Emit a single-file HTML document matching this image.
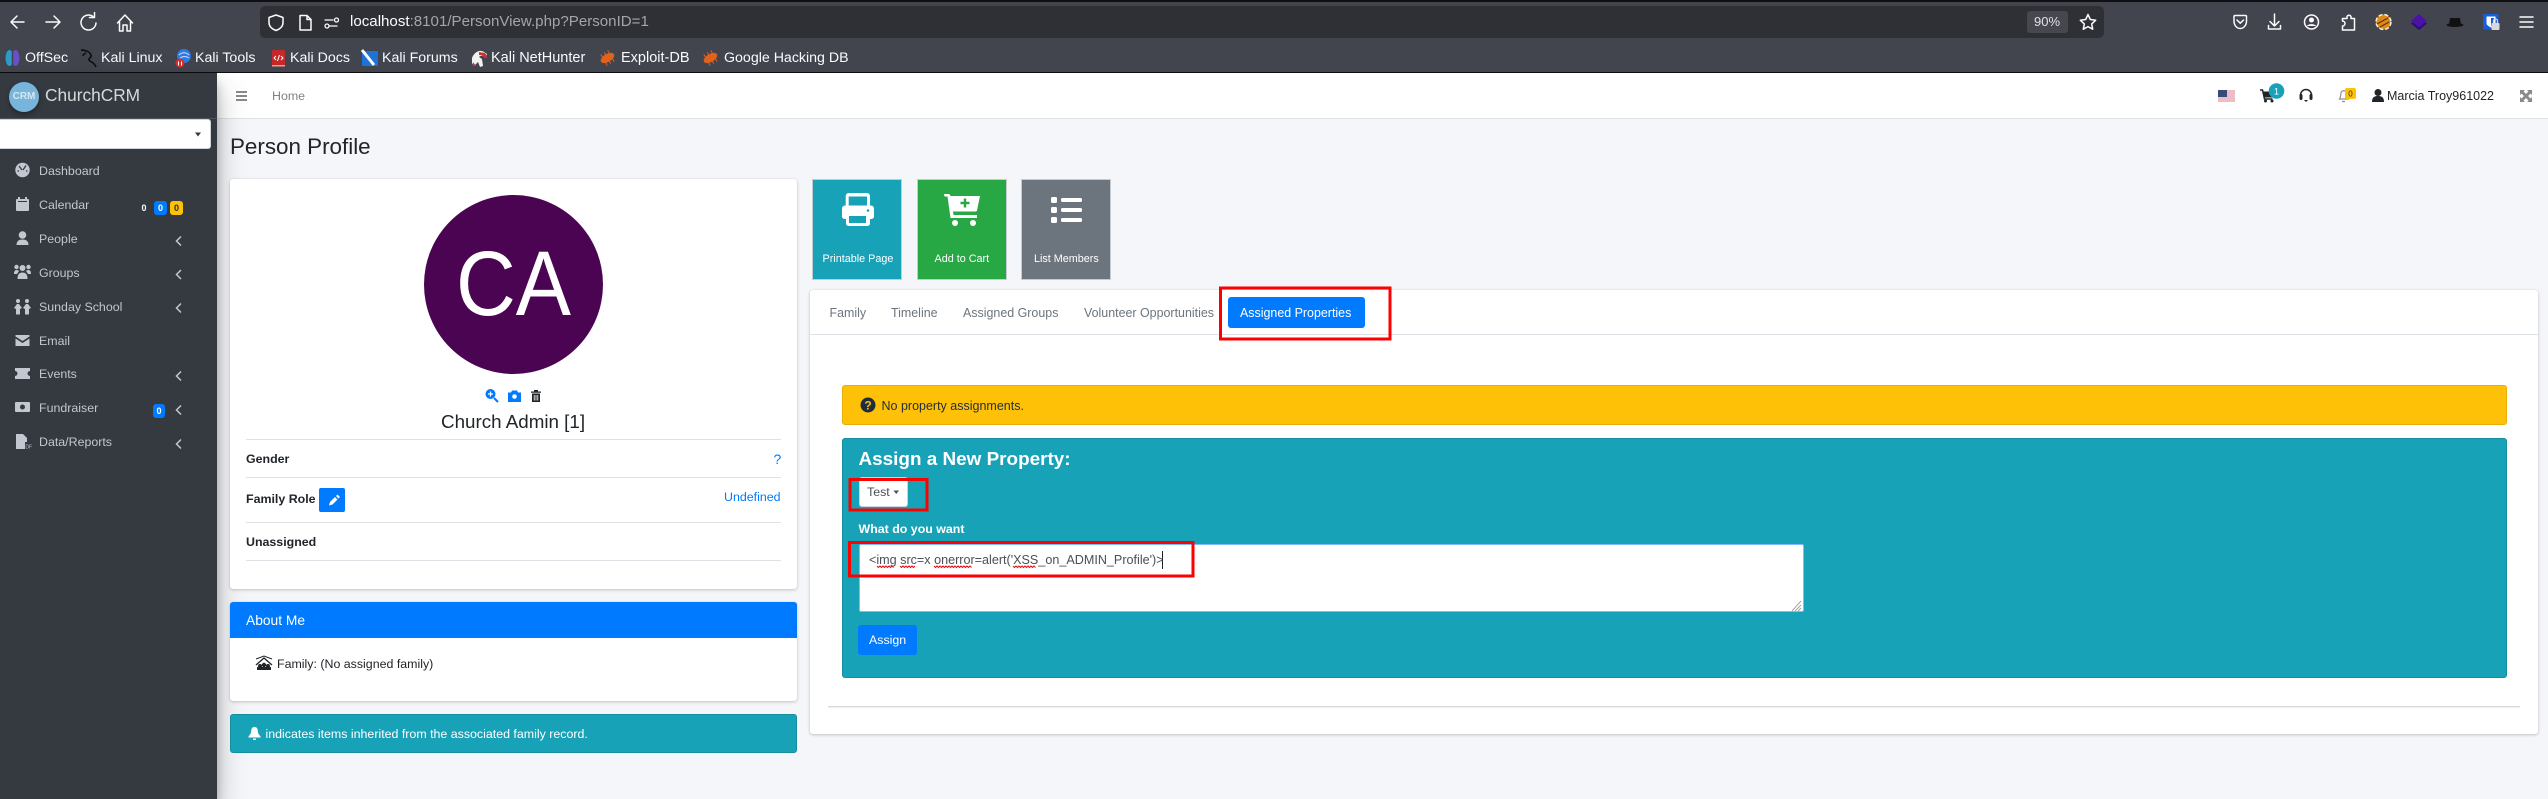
<!DOCTYPE html>
<html lang="en">
<head>
<meta charset="utf-8">
<title>Person Profile</title>
<style>
html,body{margin:0;padding:0;width:2548px;height:799px;overflow:hidden;background:#f4f6f9;font-family:"Liberation Sans",sans-serif}
.b{position:absolute;box-sizing:border-box}
.t{position:absolute;white-space:nowrap;line-height:20px;height:20px}
.side{color:#c2c7d0;font-size:12.4px;left:39px}
.bm{color:#fbfbfe;font-size:14.2px;top:48px}
.tab{color:#6c757d;font-size:12.45px;top:303px}
.lbl{color:#fff;font-size:10.8px;top:249px}
.hl{background:#dee2e6;height:1px;left:246px;width:535px}
.bdg{border-radius:3px;color:#fff;font-size:9px;font-weight:700;text-align:center;line-height:14px;height:14px}
</style>
</head>
<body>
<!-- browser chrome -->
<div class="b" style="left:0;top:0;width:2548px;height:73px;background:#42444e"></div>
<div class="b" style="left:0;top:0;width:2548px;height:2px;background:#101014"></div>
<div class="b" style="left:0;top:72px;width:2548px;height:1px;background:#0c0c0d"></div>
<div class="b" style="left:260px;top:6px;width:1844px;height:32px;background:#2f3036;border-radius:5px"></div>
<div class="b" style="left:2027px;top:11px;width:41px;height:22px;background:#47484f;border-radius:3px"></div>
<div class="t" style="left:2034px;top:12px;color:#e0e0e6;font-size:13px">90%</div>
<div class="t" style="left:350px;top:12px;font-size:15.1px;color:#fbfbfe">localhost<span style="color:#a4a4ab">:8101/PersonView.php?PersonID=1</span></div>

<div class="t bm" style="left:25px">OffSec</div>
<div class="t bm" style="left:101px">Kali Linux</div>
<div class="t bm" style="left:195px">Kali Tools</div>
<div class="t bm" style="left:290px">Kali Docs</div>
<div class="t bm" style="left:382px">Kali Forums</div>
<div class="t bm" style="left:491px;font-size:14.5px">Kali NetHunter</div>
<div class="t bm" style="left:621px;font-size:14.5px">Exploit-DB</div>
<div class="t bm" style="left:724px">Google Hacking DB</div>

<!-- navbar -->
<div class="b" style="left:217px;top:73px;width:2331px;height:46px;background:#fff;border-bottom:1px solid #dee2e6"></div>
<div class="t" style="left:272px;top:86px;font-size:12.4px;color:#7f8184">Home</div>
<div class="t" style="left:2387px;top:86px;font-size:12.5px;color:#212529">Marcia Troy961022</div>

<!-- sidebar -->
<div class="b" style="left:0;top:73px;width:217px;height:726px;background:#343a40;box-shadow:0 14px 28px rgba(0,0,0,.25),0 10px 10px rgba(0,0,0,.22)"></div>
<div class="b" style="left:0;top:118px;width:217px;height:1px;background:#4b545c"></div>
<div class="b" style="left:9px;top:82px;width:30px;height:30px;border-radius:50%;background:#77b5da;box-shadow:0 3px 6px rgba(0,0,0,.3)"></div>
<div class="t" style="left:9px;top:87px;width:30px;text-align:center;font-size:10px;font-weight:700;color:#d8e6ef">CRM</div>
<div class="t" style="left:45px;top:85px;font-size:17.3px;color:rgba(255,255,255,.8)">ChurchCRM</div>
<div class="b" style="left:0;top:119px;width:211px;height:30px;background:#fff;border-radius:0 3px 3px 0;border:1px solid #ced4da;border-left:0"></div>
<div class="t side" style="top:161px">Dashboard</div>
<div class="t side" style="top:195px">Calendar</div>
<div class="t side" style="top:229px">People</div>
<div class="t side" style="top:263px">Groups</div>
<div class="t side" style="top:297px">Sunday School</div>
<div class="t side" style="top:331px">Email</div>
<div class="t side" style="top:364px">Events</div>
<div class="t side" style="top:398px">Fundraiser</div>
<div class="t side" style="top:432px">Data/Reports</div>
<div class="bdg b" style="left:139px;top:201px;width:10px;color:#fff">0</div>
<div class="bdg b" style="left:154px;top:201px;width:13px;background:#007bff">0</div>
<div class="bdg b" style="left:170px;top:201px;width:13px;background:#ffc107;color:#1f2d3d">0</div>
<div class="bdg b" style="left:153px;top:404px;width:12px;background:#007bff">0</div>

<!-- heading -->
<div class="t" style="left:230px;top:132px;height:30px;line-height:30px;font-size:22.4px;color:#212529">Person Profile</div>

<!-- left card -->
<div class="b" style="left:230px;top:179px;width:567px;height:410px;background:#fff;border-radius:3px;box-shadow:0 0 1px rgba(0,0,0,.125),0 1px 3px rgba(0,0,0,.2)"></div>
<div class="b" style="left:424px;top:195px;width:179px;height:179px;border-radius:50%;background:#4a0452"></div>
<div class="t" style="left:424px;top:234px;width:179px;height:100px;line-height:100px;text-align:center;font-size:92px;color:#fff;transform:scaleX(.9)">CA</div>
<div class="t" style="left:441px;top:412px;font-size:18.8px;color:#212529">Church Admin [1]</div>
<div class="b hl" style="top:439px"></div>
<div class="t" style="left:246px;top:449px;font-size:12.4px;font-weight:700;color:#212529">Gender</div>
<div class="t" style="left:773.5px;top:449px;font-size:14px;color:#007bff">?</div>
<div class="b hl" style="top:477px"></div>
<div class="t" style="left:246px;top:489px;font-size:12.4px;font-weight:700;color:#212529">Family Role</div>
<div class="b" style="left:319px;top:488px;width:26px;height:24px;background:#007bff;border-radius:2px"></div>
<div class="t" style="left:724px;top:487px;font-size:12.4px;color:#007bff">Undefined</div>
<div class="b hl" style="top:522px"></div>
<div class="t" style="left:246px;top:532px;font-size:12.4px;font-weight:700;color:#212529">Unassigned</div>
<div class="b hl" style="top:560px"></div>

<!-- about -->
<div class="b" style="left:230px;top:602px;width:567px;height:99px;background:#fff;border-radius:3px;box-shadow:0 0 1px rgba(0,0,0,.125),0 1px 3px rgba(0,0,0,.2)"></div>
<div class="b" style="left:230px;top:602px;width:567px;height:36px;background:#007bff;border-radius:3px 3px 0 0"></div>
<div class="t" style="left:246px;top:611px;font-size:13.8px;color:#fff">About Me</div>
<div class="t" style="left:277px;top:654px;font-size:12.4px;color:#212529">Family: (No assigned family)</div>
<div class="b" style="left:230px;top:714px;width:567px;height:39px;background:#17a2b8;border:1px solid #148ea1;border-radius:3px"></div>
<div class="t" style="left:265.5px;top:724px;font-size:12.4px;color:#fff">indicates items inherited from the associated family record.</div>

<!-- action buttons -->
<div class="b" style="left:812px;top:179px;width:90px;height:101px;background:#17a2b8;border:1px solid #c4ccd2"></div>
<div class="b" style="left:917px;top:179px;width:90px;height:101px;background:#28a745;border:1px solid #c4ccd2"></div>
<div class="b" style="left:1021px;top:179px;width:90px;height:101px;background:#6c757d;border:1px solid #c4ccd2"></div>
<div class="t lbl" style="left:822.5px">Printable Page</div>
<div class="t lbl" style="left:934.5px">Add to Cart</div>
<div class="t lbl" style="left:1034px">List Members</div>

<!-- right card -->
<div class="b" style="left:810px;top:290px;width:1728px;height:444px;background:#fff;border-radius:3px;box-shadow:0 0 1px rgba(0,0,0,.125),0 1px 3px rgba(0,0,0,.2)"></div>
<div class="b" style="left:810px;top:334px;width:1728px;height:1px;background:#dee2e6"></div>
<div class="t tab" style="left:829.5px">Family</div>
<div class="t tab" style="left:891px">Timeline</div>
<div class="t tab" style="left:963px">Assigned Groups</div>
<div class="t tab" style="left:1084px">Volunteer Opportunities</div>
<div class="b" style="left:1228px;top:297px;width:137px;height:31px;background:#007bff;border-radius:3px"></div>
<div class="t tab" style="left:1240px;color:#fff">Assigned Properties</div>

<div class="b" style="left:842px;top:385px;width:1665px;height:40px;background:#ffc107;border:1px solid #e8ae05;border-radius:3px"></div>
<div class="t" style="left:881.5px;top:396px;font-size:12.5px;color:#1f2d3d">No property assignments.</div>

<div class="b" style="left:842px;top:438px;width:1665px;height:240px;background:#17a2b8;border:1px solid #148ea1;border-radius:3px"></div>
<div class="t" style="left:858.5px;top:450px;font-size:18.9px;font-weight:700;color:#fff">Assign a New Property:</div>
<div class="b" style="left:858.5px;top:477px;width:49px;height:30px;background:#fff;border:1px solid #ced4da;border-radius:3px"></div>
<div class="t" style="left:867px;top:482px;font-size:12.4px;color:#495057">Test</div>
<div class="t" style="left:858.5px;top:519px;font-size:12.4px;font-weight:700;color:#fff">What do you want</div>
<div class="b" style="left:858.5px;top:544px;width:945px;height:68px;background:#fff;border:1px solid #80bdff;border-radius:2px"></div>
<div class="t" style="left:869px;top:550px;font-size:12.6px;color:#495057">&lt;img src=x onerror=alert('XSS_on_ADMIN_Profile')&gt;</div>
<div class="b" style="left:858px;top:625px;width:59px;height:30px;background:#007bff;border-radius:3px"></div>
<div class="t" style="left:869px;top:630px;font-size:12.4px;color:#fff">Assign</div>
<div class="b" style="left:828px;top:706px;width:1692px;height:1px;background:#d8d8d8;box-shadow:0 1px 1px rgba(0,0,0,.08)"></div>

<!-- icon overlay, page coordinates -->
<svg class="b" style="left:0;top:0" width="2548" height="799" viewBox="0 0 2548 799" fill="none">
  <!-- nav buttons -->
  <g stroke="#fbfbfe" stroke-width="1.5" stroke-linecap="round" stroke-linejoin="round">
    <path d="M24 22H11M17 16l-6 6 6 6"/>
    <path d="M46 22h14M54 16l6 6-6 6"/>
    <path d="M93 16.500a7.500 7.500 0 1 0 3 6.500"/><path d="M94.500 12.500v5h-5"/>
    <path d="M117.500 23l7.500-8 7.500 8M119.500 21.500V31h3.500v-6h4v6h3.500v-9.500"/>
    <path d="M276 15l7 2.500v5c0 4-3 6.500-7 8-4-1.500-7-4-7-8v-5z"/>
    <path d="M300 15.500h7l4 4V30h-11zM307 15.500v4h4"/>
    <path d="M325 20h8M337 26h-8" stroke-width="1.300"/><circle cx="336.500" cy="20" r="2" stroke-width="1.300"/><circle cx="327" cy="26" r="2" stroke-width="1.300"/>
    <path d="M2088 14.500l2.300 5 5.400.7-4 3.700 1 5.300-4.700-2.600-4.700 2.600 1-5.300-4-3.700 5.400-.7z"/>
    <path d="M2235 15.500h10.500a1 1 0 0 1 1 1v4.500c0 4.500-3 7.500-6.250 7.500S2234 25.500 2234 21v-4.500a1 1 0 0 1 1-1z"/><path d="M2237 20l3.250 3.200 3.250-3.200"/>
    <path d="M2274.500 14v12M2270 21.500l4.500 4.500 4.500-4.500M2268.500 25.500V29h12v-3.500"/>
    <circle cx="2311.500" cy="22" r="7"/>
    <path d="M2347 16.500a2.200 2.200 0 0 1 4 0v2h3.500V30h-12v-4a2.500 2.500 0 0 0 0-5v-2.500h4.500z"/>
    <path d="M2520 17h13M2520 22h13M2520 27h13"/>
  </g>
  <circle cx="2311.500" cy="20" r="2.500" fill="#fbfbfe"/><path d="M2307 26c1-2.500 8-2.500 9 0z" fill="#fbfbfe"/>
  <circle cx="2383.500" cy="22" r="7.500" fill="#e08a16" stroke="#f4f0e4" stroke-width="1.500" stroke-dasharray="4 2"/>
  <path d="M2377 24l11-6M2380 27l9-5" stroke="#5a3308" stroke-width="1.200"/>
  <path d="M2411 23.500l8 6.500 8-6.500-8-6z" fill="#2f0c72"/>
  <path d="M2419 14l8 7-8 6.500-8-6.500z" fill="#4b12a8"/>
  <ellipse cx="2455" cy="25" rx="8.500" ry="2" fill="#111"/><path d="M2450 18h10l1 7h-12z" fill="#111"/>
  <path d="M2483 14h15.500v15.500H2483z" fill="#175ddc"/><path d="M2486.500 16.500h9v7c0 1.500-2.500 3-4.500 4-2-1-4.500-2.500-4.500-4z" fill="#fff"/><path d="M2491 18h3v6l-3 2z" fill="#175ddc"/>
  <rect x="2491.500" y="23" width="8" height="7" rx="1" fill="#d8d8dc"/><path d="M2493.500 23v-2a2 2 0 0 1 4 0v2" stroke="#d8d8dc" stroke-width="1.200"/>

  <!-- bookmark favicons -->
  <ellipse cx="9.500" cy="58" rx="4" ry="8" fill="#2e9ac8"/><ellipse cx="15.500" cy="58" rx="4" ry="8" fill="#6a4fc8"/><rect x="11.800" y="50" width="1.400" height="16" fill="#42444e"/>
  <path d="M81 50c5 0 9 2 10 5 1 3-3 3-2 5 1 2 5 2 7 7M86 53c-2 1-3 2-3 3" stroke="#0b0b0b" stroke-width="1.500"/>
  <circle cx="184" cy="56" r="7" fill="#2c7be5"/><path d="M179 55c3-3 7-3 10 0M180 58c3-2 6-2 9 0" stroke="#cfe3fa"/><circle cx="180" cy="63" r="4.500" fill="#d32f2f"/><path d="M178.500 61.500v4M181.500 61.500v4" stroke="#fff"/>
  <rect x="272" y="50" width="13" height="16" rx="1" fill="#c62828"/><path d="M276 56l-2 2 2 2M281 56l2 2-2 2M279.500 55l-2 6" stroke="#fff" stroke-width="1"/><rect x="272" y="65" width="13" height="1.500" fill="#e6a0a0"/>
  <rect x="362" y="51" width="16" height="15" rx="1" fill="#1e72d8"/><path d="M362 50l12 15" stroke="#fff" stroke-width="3"/>
  <path d="M472 58c2-6 8-9 12-6l3 2-1 4c-2-2-5-3-7-1l3 2 1 7-3 1-2-5-4 4-2-3z" fill="#f2f2f2"/><path d="M479 52l6 1 2 3-2 3c-1-3-3-4-6-4z" fill="#d32f2f"/><path d="M473 62l3 4-3 0z" fill="#d32f2f"/>
  <g transform="rotate(60 607.500 58)"><ellipse cx="607.500" cy="58" rx="4" ry="7.500" fill="#e0621c"/><path d="M601 54l13 0M601 58l13 0M601 62l13 0" stroke="#e0621c"/></g>
  <g transform="rotate(60 710.500 58)"><ellipse cx="710.500" cy="58" rx="4" ry="7.500" fill="#e0621c"/><path d="M704 54l13 0M704 58l13 0M704 62l13 0" stroke="#e0621c"/></g>

  <!-- navbar icons -->
  <path d="M236 92h11M236 96h11M236 100h11" stroke="#777" stroke-width="1.700"/>
  <rect x="2218" y="90" width="17" height="12" fill="#fff"/>
  <path d="M2218 91h17M2218 93h17M2218 95h17M2218 97h17M2218 99h17M2218 101h17" stroke="#d97b85" stroke-width="1"/>
  <rect x="2218" y="90" width="9" height="7" fill="#3a4a7a"/>
  <path d="M2260 90h2.500l2 9h8" stroke="#212529" stroke-width="1.500"/><path d="M2263 91.500h11l-1.500 6h-8z" fill="#212529"/><circle cx="2265.500" cy="101" r="1.500" fill="#212529"/><circle cx="2272" cy="101" r="1.500" fill="#212529"/>
  <circle cx="2276.500" cy="91" r="7.800" fill="#17a2b8"/><text x="2276.500" y="94.500" text-anchor="middle" font-family="Liberation Sans" font-size="9" fill="#fff">1</text>
  <path d="M2300.500 97v-2a5.500 5.500 0 0 1 11 0v2" stroke="#212529" stroke-width="1.500"/><rect x="2299.500" y="94" width="3" height="6" rx="1.500" fill="#212529"/><rect x="2309.500" y="94" width="3" height="6" rx="1.500" fill="#212529"/><path d="M2304 100l2 2 2-2z" fill="#212529"/>
  <path d="M2339.500 99c1.500-2 1-4 1.500-6 .5-3 5-3 5.500 0 .5 2 0 4 1.500 6zM2342 101.500h3" stroke="#8b8f94" stroke-width="1.200"/>
  <rect x="2345" y="88" width="11" height="11" rx="2" fill="#ffc107"/><text x="2350.500" y="96.500" text-anchor="middle" font-family="Liberation Sans" font-size="8" fill="#1f2d3d">0</text>
  <circle cx="2378" cy="92.500" r="3.500" fill="#212529"/><path d="M2372 102c0-5 2.500-6 6-6s6 1 6 6z" fill="#212529"/>
  <path d="M2520 90h5l-5 5zM2532 90v5l-5-5zM2520 102v-5l5 5zM2532 102h-5l5-5z" fill="#8a8a8a"/>
  <path d="M2521.500 91.500l9 9M2530.500 91.500l-9 9" stroke="#8a8a8a" stroke-width="3"/>

  <!-- sidebar caret + icons -->
  <path d="M195 132.500h6l-3 4z" fill="#343a40"/>
  <g fill="#c2c7d0">
    <circle cx="22.500" cy="170" r="7.200"/>
    <rect x="16" y="199" width="13" height="12" rx="1"/><rect x="18" y="197" width="2" height="3"/><rect x="25" y="197" width="2" height="3"/>
    <circle cx="22.500" cy="235" r="3.800"/><path d="M16.500 245c0-4 2.500-5.500 6-5.500s6 1.500 6 5.500z"/>
    <circle cx="22.500" cy="268" r="3"/><circle cx="16.500" cy="267" r="2.200"/><circle cx="28.500" cy="267" r="2.200"/><path d="M17.500 279c0-5 2-6.500 5-6.500s5 1.500 5 6.500z"/><path d="M14 274c0-3 1-4 2.500-4s2 .5 2.500 1l-2 3zM31 274c0-3-1-4-2.500-4s-2 .5-2.500 1l2 3z"/>
    <circle cx="18" cy="301" r="2"/><circle cx="27" cy="301" r="2"/><path d="M14 308l3-4h2l3 4-2 1v5.500h-4V309zM23 308l3-4h2l3 4-2 1v5.500h-4V309z"/>
    <path d="M15.500 335h14v1.500l-7 4.500-7-4.500zM15.500 338.500l7 4.500 7-4.500V346h-14z"/>
    <path d="M15 368h15v3a2 2 0 0 0 0 5v3H15v-3a2 2 0 0 0 0-5z"/>
    <rect x="15" y="402" width="15" height="10" rx="1"/>
    <path d="M16 434h7l4 4v4h-2v7h-9z"/>
  </g>
  <circle cx="22.500" cy="407" r="2.500" fill="#343a40"/>
  <path d="M19 166l3 4M26 165.500l-3 4.500M17.500 171h1.500M26 171h1.500" stroke="#343a40" stroke-width="1.300"/>
  <path d="M18 201.500h9" stroke="#343a40"/>
  <text x="22" y="448.500" font-family="Liberation Sans" font-size="5" fill="#c2c7d0">PDF</text>
  <g stroke="#c2c7d0" stroke-width="1.500">
    <path d="M181 236.500l-4.500 4.500 4.500 4.500M181 270l-4.500 4.500 4.500 4.500M181 303.500l-4.500 4.500 4.500 4.500M181 371.500l-4.500 4.500 4.500 4.500M181 405.500l-4.500 4.500 4.500 4.500M181 439.500l-4.500 4.500 4.500 4.500"/>
  </g>

  <!-- profile icons -->
  <circle cx="490.500" cy="394" r="5" fill="#007bff"/><path d="M494 398l4 4" stroke="#007bff" stroke-width="2"/><path d="M488 394h5M490.500 391.500v5" stroke="#fff" stroke-width="1.200"/>
  <path d="M508 392.500h3l1-2h5l1 2h3v9.500h-13z" fill="#007bff"/><circle cx="514.500" cy="396.500" r="2.300" fill="#fff"/>
  <path d="M531 391.500h10v1.300h-10zM534 390h4v1.500h-4zM532 393.500h8v8.500h-8z" fill="#212529"/><path d="M534.200 395v5.500M536 395v5.500M537.800 395v5.500" stroke="#fff" stroke-width=".8"/>
  <path d="M329 505.500l1-3.500 5-5 2.500 2.500-5 5zM336 496l1.500-1.500 2.500 2.500-1.500 1.500z" fill="#fff"/>
  <path d="M256 665l8-7 8 7" stroke="#212529" stroke-width="1.300"/><path d="M256 659l8-3 8 3" stroke="#212529"/><circle cx="260" cy="666" r="2" fill="#212529"/><circle cx="264" cy="665" r="2.200" fill="#212529"/><circle cx="268" cy="666" r="2" fill="#212529"/><rect x="257" y="667" width="14" height="3" fill="#212529"/>
  <path d="M254.500 727c2.500 0 3 1.500 3.300 4 .3 2.500 1 3.500 2.700 5.500v1h-12v-1c1.700-2 2.400-3 2.700-5.500.3-2.500.8-4 3.300-4z" fill="#fff"/><path d="M253 738.500h3v1.500h-3z" fill="#fff"/>

  <!-- action button icons -->
  <g fill="#fff">
    <path d="M845.700 207v-11a3 3 0 0 1 3-3h18.300a3 3 0 0 1 3 3v11h-3v-10.500h-18.300V207z"/>
    <path d="M845 205.500h26a3 3 0 0 1 3 3v8a2.500 2.500 0 0 1-2.500 2.500H870v4.500a2.500 2.500 0 0 1-2.500 2.500h-19a2.500 2.500 0 0 1-2.500-2.500V219h-1.500a2.500 2.500 0 0 1-2.500-2.500v-8a3 3 0 0 1 3-3z"/>
    <path d="M944 194h4.500c1 0 1.500.5 2 2h29.500l-3 14.500c-.2.800-.8 1-1.500 1h-22.500l.5 3.500h23.500v3h-26.500l-3-21.500h-3z"/>
    <circle cx="955" cy="223" r="3"/><circle cx="973" cy="223" r="3"/>
    <rect x="1051" y="197" width="6" height="6" rx="1.500"/><rect x="1051" y="207" width="6" height="6" rx="1.500"/><rect x="1051" y="217" width="6" height="6" rx="1.500"/>
    <rect x="1061" y="198" width="21" height="4" rx="1.500"/><rect x="1061" y="208" width="21" height="4" rx="1.500"/><rect x="1061" y="218" width="21" height="4" rx="1.500"/>
  </g>
  <rect x="849" y="216" width="17" height="7" fill="#17a2b8"/><circle cx="868" cy="210.500" r="1.300" fill="#17a2b8"/>
  <path d="M965 198.500v9M960.500 203h9" stroke="#28a745" stroke-width="2.400"/>

  <!-- alert + form details -->
  <circle cx="868" cy="405" r="7.500" fill="#1f2d3d"/>
  <text x="868" y="409.500" text-anchor="middle" font-family="Liberation Sans" font-size="12" font-weight="700" fill="#ffc107">?</text>
  <path d="M893.500 490.500h5.500l-2.750 3.500z" fill="#495057"/>
  <path d="M1162.500 551v18" stroke="#212529"/>
  <g stroke="#e01010" stroke-width="1" fill="none">
    <path d="M877 566l1.500 1.500 1.500-1.500 1.500 1.500 1.500-1.500 1.500 1.500 1.500-1.500 1.500 1.500 1.500-1.500 1.500 1.500 1.500-1.500 1.500 1.500"/>
    <path d="M900 566l1.500 1.500 1.500-1.500 1.500 1.500 1.500-1.500 1.500 1.500 1.500-1.500 1.500 1.500 1.500-1.500 1.500 1.500 1.500-1.500"/>
    <path d="M934 566l1.500 1.500 1.500-1.500 1.500 1.500 1.500-1.500 1.500 1.500 1.500-1.500 1.500 1.500 1.500-1.500 1.500 1.500 1.500-1.500 1.500 1.500 1.500-1.500 1.500 1.500 1.500-1.500 1.500 1.500 1.500-1.500 1.500 1.500 1.500-1.500 1.500 1.500 1.500-1.500 1.500 1.500 1.500-1.500 1.500 1.500 1.500-1.500 1.500 1.500"/>
    <path d="M1013 566l1.500 1.500 1.500-1.500 1.500 1.500 1.500-1.500 1.500 1.500 1.500-1.500 1.500 1.500 1.500-1.500 1.500 1.500 1.500-1.500 1.500 1.500 1.500-1.500 1.500 1.500 1.500-1.500 1.500 1.500"/>
  </g>
  <path d="M1801 601l-9 10M1801 605l-6 6M1801 608l-3 3" stroke="#8a8a8a" stroke-width=".8"/>

  <!-- red annotation boxes -->
  <g stroke="#ff0000" stroke-width="3" fill="none">
    <rect x="1220.500" y="288" width="169.500" height="51"/>
    <rect x="850" y="479.500" width="77" height="30.500"/>
    <rect x="849.500" y="542.500" width="343.500" height="33.500"/>
  </g>
</svg>
</body>
</html>
